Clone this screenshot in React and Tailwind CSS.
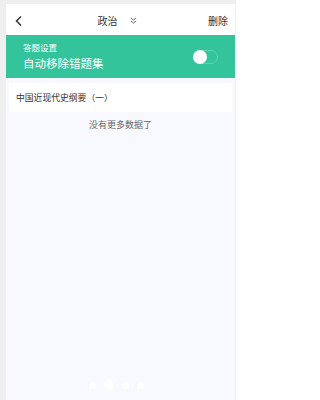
import React, { useState } from "react";

export default function App() {
  const [autoRemove, setAutoRemove] = useState(false);

  return (
    <div
      className="w-[236px] h-[400px] bg-[#efefef] pt-[4px] pl-[6px] pr-[1px] overflow-hidden"
      style={{ fontFamily: '"Noto Sans CJK SC", "Noto Sans", sans-serif' }}
    >
      <div className="h-full flex flex-col bg-[#f7f9fe]">
        {/* header */}
        <div className="h-[31px] bg-white flex items-center px-[6px] pt-[2px]">
          <svg width="10" height="12" viewBox="0 0 10 12" className="ml-[2px]">
            <path d="M7 1.5 L2.5 6 L7 10.5" fill="none" stroke="#333" strokeWidth="1.5" />
          </svg>
          <div className="flex-1 flex items-center justify-center gap-[12px] text-[10px] text-[#333] pl-[2px]">
            <span>政治</span>
            <svg width="7" height="7" viewBox="0 0 8 8">
              <path d="M1 1 L4 3.5 L7 1 M1 4.5 L4 7 L7 4.5" fill="none" stroke="#555" strokeWidth="1" />
            </svg>
          </div>
          <span className="text-[10px] text-[#333] mr-[1px]">删除</span>
        </div>

        {/* settings bar */}
        <div className="h-[43px] bg-[#33c49c] flex items-center pl-[17px] pr-[17px]">
          <div className="flex-1 text-white">
            <div className="text-[8.5px] leading-[12px]">答题设置</div>
            <div className="text-[11.5px] leading-[17px] mt-[2px]">自动移除错题集</div>
          </div>
          <button
            onClick={() => setAutoRemove(!autoRemove)}
            className="w-[25px] h-[14px] rounded-full border border-[#5fd3b2] relative"
          >
            <span
              className={
                autoRemove
                  ? "absolute top-[-1px] right-[-1px] w-[14px] h-[14px] rounded-full bg-white"
                  : "absolute top-[-1px] left-[-1px] w-[14px] h-[14px] rounded-full bg-white"
              }
            />
          </button>
        </div>

        {/* list */}
        <div className="px-[3px] pt-[5px]">
          <div className="h-[29px] bg-white flex items-center px-[7px] text-[8.8px] text-[#333]">
            中国近现代史纲要（一）
          </div>
        </div>
        <div className="text-center text-[9px] text-[#666] mt-[6px]">没有更多数据了</div>

        <div className="flex-1" />

        {/* loading dots */}
        <div className="flex items-center justify-center gap-[8px] pb-[10px] pr-[9px]">
          <span className="w-[7px] h-[7px] rounded-full bg-white" />
          <span className="w-[10px] h-[10px] rounded-full bg-white" />
          <span className="w-[7px] h-[7px] rounded-full bg-white" />
          <span className="w-[7px] h-[7px] rounded-full bg-white" />
        </div>
      </div>
    </div>
  );
}
